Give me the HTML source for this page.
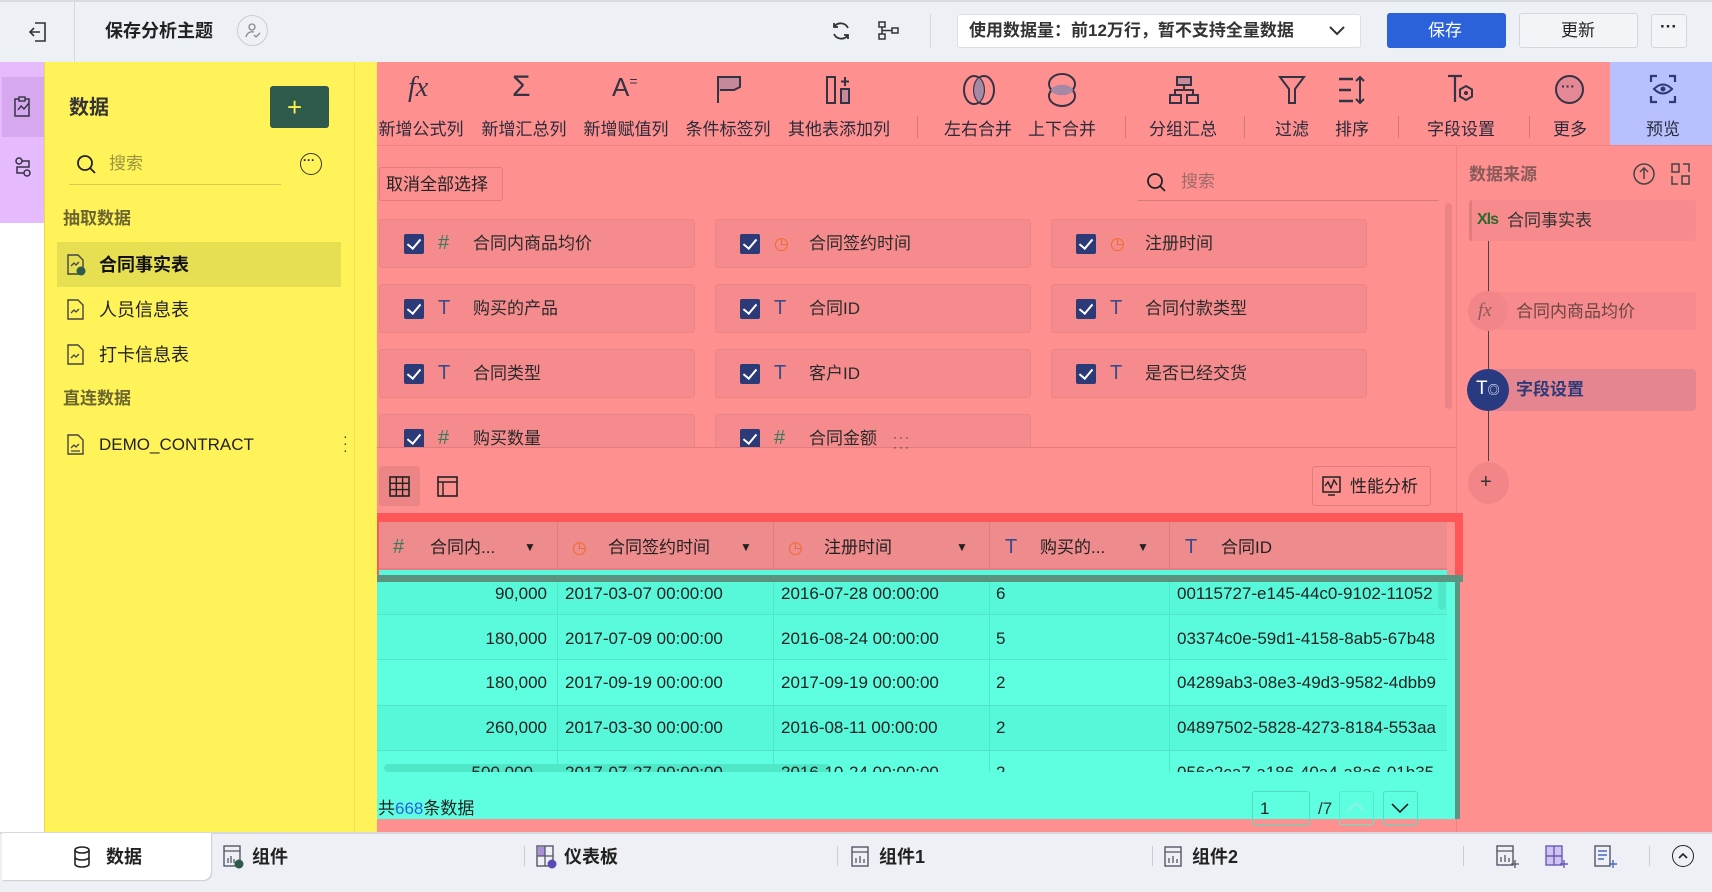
<!DOCTYPE html>
<html><head><meta charset="utf-8">
<style>
*{box-sizing:border-box;margin:0;padding:0}
body{width:1712px;height:892px;overflow:hidden;position:relative;background:#fff;font-family:"Liberation Sans","Noto Sans CJK SC",sans-serif;color:#222;font-size:16px}
.a{position:absolute}
.t{position:absolute;white-space:nowrap;line-height:1}
svg{position:absolute;overflow:visible}
.card{position:absolute;width:316px;height:49px;background:#f58b8d;border:1px solid #ec8486;border-radius:3px}
.cb{position:absolute;left:24px;top:14px;width:20px;height:20px;background:#2c3a78;border-radius:2px}
.cb:after{content:"";position:absolute;left:6px;top:2px;width:6px;height:11px;border:solid #fff;border-width:0 2.5px 2.5px 0;transform:rotate(40deg)}
.ty{position:absolute;left:58px;top:13px;font-size:20px;line-height:1}
.lb{position:absolute;left:93px;top:15px;font-size:17px;line-height:1;color:#2a2a2a}
.tb{position:absolute;top:115px;font-size:17px;transform:translateX(-50%);white-space:nowrap;color:#2a2a3a}
.row{position:absolute;left:377px;width:1070px;height:45px;border-bottom:1px solid #4fe6c9}
.cell{position:absolute;top:14px;font-size:17px;white-space:nowrap;color:#222}
</style></head><body>
<!-- top bar -->
<div class="a" style="left:0;top:0;width:1712px;height:62px;background:#edf0f5;border-top:2px solid #d8dbe0"></div>
<div class="a" style="left:74px;top:2px;width:1px;height:60px;background:#d5d8de"></div>
<svg style="left:28px;top:21px" width="20" height="22"><path d="M7 2h10v18H7M2 11h10M6 7l-4 4 4 4" fill="none" stroke="#333" stroke-width="1.6"/></svg>
<div class="t" style="left:105px;top:22px;font-size:18px;font-weight:bold;color:#222">保存分析主题</div>
<div class="a" style="left:237px;top:15px;width:31px;height:31px;border:1px solid #c9ccd2;border-radius:50%"></div>
<svg style="left:245px;top:22px" width="16" height="16"><circle cx="7" cy="5" r="3" fill="none" stroke="#888" stroke-width="1.3"/><path d="M1 15c1-4 4-6 8-5M9 13l2 2 4-4" fill="none" stroke="#888" stroke-width="1.3"/></svg>
<svg style="left:830px;top:20px" width="22" height="22"><path d="M18 8A8 8 0 0 0 4 7M4 14a8 8 0 0 0 14 1M4 3v4h4M18 19v-4h-4" fill="none" stroke="#333" stroke-width="1.8"/></svg>
<svg style="left:878px;top:21px" width="22" height="20"><rect x="1" y="1" width="6" height="5" fill="none" stroke="#333" stroke-width="1.5"/><rect x="1" y="13" width="6" height="5" fill="none" stroke="#333" stroke-width="1.5"/><rect x="14" y="7" width="6" height="5" fill="none" stroke="#333" stroke-width="1.5"/><path d="M4 6v7M4 9.5h10" stroke="#333" stroke-width="1.5"/></svg>
<div class="a" style="left:930px;top:14px;width:1px;height:34px;background:#d5d8de"></div>
<div class="a" style="left:957px;top:14px;width:404px;height:34px;background:#fff;border:1px solid #dcdfe5;border-radius:3px"></div>
<div class="t" style="left:969px;top:22px;font-size:17px;font-weight:bold;color:#333">使用数据量：前12万行，暂不支持全量数据</div>
<svg style="left:1329px;top:25px" width="16" height="12"><path d="M1 2l7 7 7-7" fill="none" stroke="#333" stroke-width="2"/></svg>
<div class="a" style="left:1387px;top:13px;width:119px;height:35px;background:#2b62da;border-radius:3px"></div>
<div class="t" style="left:1428px;top:22px;font-size:17px;color:#fff">保存</div>
<div class="a" style="left:1519px;top:13px;width:119px;height:35px;background:#f3f4f7;border:1px solid #d3d6dc;border-radius:3px"></div>
<div class="t" style="left:1561px;top:22px;font-size:17px;color:#222">更新</div>
<div class="a" style="left:1651px;top:14px;width:36px;height:34px;background:#f3f4f7;border:1px solid #d3d6dc;border-radius:3px"></div>
<div class="t" style="left:1660px;top:18px;font-size:17px;font-weight:bold">···</div>

<!-- left purple strip -->
<div class="a" style="left:0;top:62px;width:44px;height:161px;background:#e6bbfd"></div>
<div class="a" style="left:2px;top:77px;width:42px;height:60px;background:#d6a9ee"></div>
<svg style="left:13px;top:96px" width="20" height="22"><rect x="2" y="3" width="14" height="17" fill="none" stroke="#334" stroke-width="1.5"/><rect x="6" y="1" width="6" height="4" fill="#d6a9ee" stroke="#334" stroke-width="1.4"/><path d="M5 14l3-4 3 3 5-6" fill="none" stroke="#334" stroke-width="1.4"/></svg>
<svg style="left:13px;top:156px" width="20" height="22"><circle cx="6" cy="5" r="3" fill="none" stroke="#334" stroke-width="1.5"/><circle cx="14" cy="17" r="3" fill="none" stroke="#334" stroke-width="1.5"/><path d="M9 5h7v6H4v6h7" fill="none" stroke="#334" stroke-width="1.5"/></svg>

<!-- yellow panel -->
<div class="a" style="left:44px;top:62px;width:333px;height:770px;background:#fff359;border-left:1px solid #e6d84a"></div>
<div class="a" style="left:354px;top:62px;width:1px;height:770px;background:#f0e250"></div>
<div class="t" style="left:69px;top:98px;font-size:20px;font-weight:bold;color:#333">数据</div>
<div class="a" style="left:270px;top:86px;width:59px;height:42px;background:#2d5a4b;border-radius:3px"></div>
<div class="t" style="left:287px;top:94px;font-size:26px;color:#ffef4a">+</div>
<svg style="left:76px;top:154px" width="22" height="22"><circle cx="9" cy="9" r="7" fill="none" stroke="#222" stroke-width="1.8"/><path d="M14 14l5 5" stroke="#222" stroke-width="1.8"/></svg>
<div class="t" style="left:109px;top:155px;font-size:17px;color:#9a9540">搜索</div>
<div class="a" style="left:69px;top:184px;width:212px;height:1px;background:#d6cb4a"></div>
<div class="a" style="left:300px;top:153px;width:22px;height:22px;border:1.5px solid #333;border-radius:50%"></div>
<div class="t" style="left:303px;top:154px;font-size:12px;font-weight:bold">···</div>
<div class="t" style="left:63px;top:210px;font-size:17px;font-weight:bold;color:#6b6630">抽取数据</div>
<div class="a" style="left:57px;top:242px;width:284px;height:45px;background:#e6df52"></div>
<svg style="left:66px;top:254px" width="20" height="22"><path d="M2 1h10l5 5v14H2z" fill="none" stroke="#444" stroke-width="1.4"/><path d="M5 12l3-3 2 2 3-3" fill="none" stroke="#444" stroke-width="1.3"/><circle cx="15" cy="17" r="4.5" fill="#2d5a4b"/></svg>
<div class="t" style="left:99px;top:256px;font-size:18px;font-weight:bold;color:#111">合同事实表</div>
<svg style="left:66px;top:299px" width="20" height="22"><path d="M2 1h10l5 5v14H2z" fill="none" stroke="#444" stroke-width="1.4"/><path d="M5 14l3-3 2 2 3-3" fill="none" stroke="#444" stroke-width="1.3"/></svg>
<div class="t" style="left:99px;top:301px;font-size:18px;color:#222">人员信息表</div>
<svg style="left:66px;top:344px" width="20" height="22"><path d="M2 1h10l5 5v14H2z" fill="none" stroke="#444" stroke-width="1.4"/><path d="M5 14l3-3 2 2 3-3" fill="none" stroke="#444" stroke-width="1.3"/></svg>
<div class="t" style="left:99px;top:346px;font-size:18px;color:#222">打卡信息表</div>
<div class="t" style="left:63px;top:390px;font-size:17px;font-weight:bold;color:#6b6630">直连数据</div>
<svg style="left:66px;top:434px" width="20" height="22"><path d="M2 1h10l5 5v14H2z" fill="none" stroke="#444" stroke-width="1.4"/><path d="M5 14l3-3 2 2 3-3M5 17h9" fill="none" stroke="#444" stroke-width="1.3"/></svg>
<div class="t" style="left:99px;top:436px;font-size:17px;color:#222">DEMO_CONTRACT</div>
<div class="t" style="left:343px;top:433px;font-size:14px;line-height:7px;color:#333">·<br>·<br>·</div>

<!-- red main -->
<div class="a" style="left:377px;top:62px;width:1335px;height:770px;background:#fe9190"></div>
<div class="a" style="left:1610px;top:62px;width:102px;height:84px;background:#b8c0fd"></div>
<div class="a" style="left:377px;top:145px;width:1335px;height:1px;background:#ef8283"></div>
<!-- toolbar icons -->
<div class="t" style="left:408px;top:74px;font-size:28px;font-style:italic;font-family:'Liberation Serif',serif;color:#334">fx</div>
<div class="t" style="left:512px;top:72px;font-size:30px;color:#334">Σ</div>
<div class="t" style="left:612px;top:74px;font-size:26px;color:#334">A<span style="font-size:14px;vertical-align:top">=</span></div>
<svg style="left:716px;top:75px" width="26" height="30"><path d="M2 28V2h22v10l-6 3H4" fill="#c48a9a" stroke="#334" stroke-width="2"/></svg>
<svg style="left:825px;top:75px" width="28" height="30"><rect x="2" y="2" width="8" height="26" fill="none" stroke="#334" stroke-width="2"/><rect x="16" y="14" width="8" height="14" fill="#c48a9a" stroke="#334" stroke-width="2"/><path d="M20 2v9M16 6.5h8" stroke="#334" stroke-width="2"/></svg>
<div class="a" style="left:917px;top:116px;width:1px;height:22px;background:#d27878"></div>
<svg style="left:962px;top:74px" width="34" height="32"><ellipse cx="12" cy="16" rx="10" ry="14" fill="none" stroke="#334" stroke-width="2"/><ellipse cx="22" cy="16" rx="10" ry="14" fill="none" stroke="#334" stroke-width="2"/><path d="M17 4a10 14 0 0 1 0 24a10 14 0 0 1 0-24z" fill="#a58aa6"/></svg>
<svg style="left:1047px;top:72px" width="30" height="36"><ellipse cx="15" cy="12" rx="13" ry="10" fill="none" stroke="#334" stroke-width="2"/><ellipse cx="15" cy="24" rx="13" ry="10" fill="none" stroke="#334" stroke-width="2"/><ellipse cx="15" cy="18" rx="11" ry="5" fill="#a58aa6"/></svg>
<div class="a" style="left:1125px;top:116px;width:1px;height:22px;background:#d27878"></div>
<svg style="left:1168px;top:75px" width="32" height="30"><rect x="9" y="2" width="14" height="8" fill="#c48a9a" stroke="#334" stroke-width="2"/><rect x="2" y="20" width="11" height="8" fill="none" stroke="#334" stroke-width="2"/><rect x="19" y="20" width="11" height="8" fill="none" stroke="#334" stroke-width="2"/><path d="M16 10v5M7 20v-5h18v5" fill="none" stroke="#334" stroke-width="2"/></svg>
<div class="a" style="left:1244px;top:116px;width:1px;height:22px;background:#d27878"></div>
<svg style="left:1278px;top:75px" width="28" height="30"><path d="M2 2h24L17 14v14h-6V14z" fill="none" stroke="#334" stroke-width="2"/></svg>
<svg style="left:1337px;top:75px" width="30" height="30"><path d="M2 4h14M2 15h12M2 26h14" stroke="#334" stroke-width="2.5"/><path d="M23 2v26M19 6l4-4 4 4M19 24l4 4 4-4" fill="none" stroke="#334" stroke-width="2"/></svg>
<div class="a" style="left:1398px;top:116px;width:1px;height:22px;background:#d27878"></div>
<svg style="left:1446px;top:74px" width="32" height="32"><path d="M2 2h14M9 2v26" stroke="#334" stroke-width="2.2"/><path d="M20 12l6 3.5v7L20 26l-6-3.5v-7z" fill="none" stroke="#334" stroke-width="2"/><circle cx="20" cy="19" r="2" fill="#334"/></svg>
<div class="a" style="left:1529px;top:116px;width:1px;height:22px;background:#d27878"></div>
<div class="a" style="left:1555px;top:75px;width:29px;height:29px;border:2px solid #334;border-radius:50%;background:#e58895"></div>
<div class="t" style="left:1561px;top:79px;font-size:14px;font-weight:bold;color:#334">···</div>
<svg style="left:1649px;top:74px" width="28" height="30"><path d="M2 8V2h6M20 2h6v6M26 22v6h-6M8 28H2v-6" fill="none" stroke="#2c3a78" stroke-width="2.2"/><path d="M5 15q9-9 18 0q-9 9-18 0z" fill="none" stroke="#2c3a78" stroke-width="2"/><circle cx="14" cy="15" r="2.5" fill="#2c3a78"/></svg>
<div class="tb" style="left:421px">新增公式列</div>
<div class="tb" style="left:524px">新增汇总列</div>
<div class="tb" style="left:626px">新增赋值列</div>
<div class="tb" style="left:728px">条件标签列</div>
<div class="tb" style="left:839px">其他表添加列</div>
<div class="tb" style="left:978px">左右合并</div>
<div class="tb" style="left:1062px">上下合并</div>
<div class="tb" style="left:1183px">分组汇总</div>
<div class="tb" style="left:1292px">过滤</div>
<div class="tb" style="left:1352px">排序</div>
<div class="tb" style="left:1461px">字段设置</div>
<div class="tb" style="left:1570px">更多</div>
<div class="tb" style="left:1663px">预览</div>

<!-- field select -->
<div class="a" style="left:379px;top:167px;width:124px;height:34px;border:1px solid #e07c7d;border-radius:3px;background:#fb8f8f"></div>
<div class="t" style="left:386px;top:176px;font-size:17px;color:#222">取消全部选择</div>
<svg style="left:1146px;top:172px" width="22" height="22"><circle cx="9" cy="9" r="7" fill="none" stroke="#222" stroke-width="1.8"/><path d="M14 14l5 5" stroke="#222" stroke-width="1.8"/></svg>
<div class="t" style="left:1181px;top:173px;font-size:17px;color:#a06a6a">搜索</div>
<div class="a" style="left:1138px;top:200px;width:301px;height:1px;background:#d77a7b"></div>
<div class="a" style="left:1445px;top:203px;width:7px;height:206px;background:#ec8384;border-radius:4px"></div>

<div class="card" style="left:379px;top:219px"><div class="cb"></div><div class="ty" style="color:#3a7a5a">#</div><div class="lb">合同内商品均价</div></div>
<div class="card" style="left:715px;top:219px"><div class="cb"></div><div class="ty" style="color:#f06a2a;font-size:17px;top:15px">◷</div><div class="lb">合同签约时间</div></div>
<div class="card" style="left:1051px;top:219px"><div class="cb"></div><div class="ty" style="color:#f06a2a;font-size:17px;top:15px">◷</div><div class="lb">注册时间</div></div>
<div class="card" style="left:379px;top:284px"><div class="cb"></div><div class="ty" style="color:#3d4a8a">T</div><div class="lb">购买的产品</div></div>
<div class="card" style="left:715px;top:284px"><div class="cb"></div><div class="ty" style="color:#3d4a8a">T</div><div class="lb">合同ID</div></div>
<div class="card" style="left:1051px;top:284px"><div class="cb"></div><div class="ty" style="color:#3d4a8a">T</div><div class="lb">合同付款类型</div></div>
<div class="card" style="left:379px;top:349px"><div class="cb"></div><div class="ty" style="color:#3d4a8a">T</div><div class="lb">合同类型</div></div>
<div class="card" style="left:715px;top:349px"><div class="cb"></div><div class="ty" style="color:#3d4a8a">T</div><div class="lb">客户ID</div></div>
<div class="card" style="left:1051px;top:349px"><div class="cb"></div><div class="ty" style="color:#3d4a8a">T</div><div class="lb">是否已经交货</div></div>
<div class="a" style="left:377px;top:410px;width:1070px;height:38px;overflow:hidden">
<div class="card" style="left:2px;top:4px"><div class="cb"></div><div class="ty" style="color:#3a7a5a">#</div><div class="lb">购买数量</div></div>
<div class="card" style="left:338px;top:4px"><div class="cb"></div><div class="ty" style="color:#3a7a5a">#</div><div class="lb">合同金额</div></div>
</div>
<div class="a" style="left:377px;top:447px;width:1079px;height:1px;background:#e07c7d"></div>
<div class="t" style="left:893px;top:432px;font-size:12px;line-height:10px;color:#333;letter-spacing:2px">···<br>···</div>

<!-- right panel -->
<div class="a" style="left:1456px;top:146px;width:1px;height:686px;background:#ef8283"></div>
<div class="t" style="left:1469px;top:166px;font-size:17px;font-weight:bold;color:#8a5a5a">数据来源</div>
<svg style="left:1632px;top:162px" width="24" height="24"><circle cx="12" cy="12" r="10" fill="none" stroke="#444" stroke-width="1.5"/><path d="M12 17V7M8 10l4-4 4 4" fill="none" stroke="#444" stroke-width="1.5"/></svg>
<svg style="left:1671px;top:162px" width="20" height="24"><rect x="1" y="2" width="7" height="8" fill="none" stroke="#444" stroke-width="1.5"/><rect x="11" y="14" width="7" height="8" fill="none" stroke="#444" stroke-width="1.5"/><path d="M1 14v8h6M18 10V2h-6" fill="none" stroke="#444" stroke-width="1.5"/></svg>
<div class="a" style="left:1469px;top:200px;width:227px;height:41px;background:#f78a8d;border-left:3px solid #e07c7d;border-radius:3px"></div>
<div class="t" style="left:1477px;top:212px;font-size:16px;font-weight:bold;color:#2d6a2d;letter-spacing:-1px">Xls</div>
<div class="t" style="left:1507px;top:212px;font-size:17px;color:#333">合同事实表</div>
<div class="a" style="left:1488px;top:241px;width:1px;height:220px;background:#444"></div>
<div class="a" style="left:1469px;top:292px;width:227px;height:38px;background:#f78a8d;border-radius:19px 3px 3px 19px"></div>
<div class="a" style="left:1468px;top:291px;width:40px;height:40px;background:#f18588;border-radius:50%"></div>
<div class="t" style="left:1478px;top:301px;font-size:19px;font-style:italic;font-family:'Liberation Serif',serif;color:#8a5a5a">fx</div>
<div class="t" style="left:1516px;top:303px;font-size:17px;color:#6a4545">合同内商品均价</div>
<div class="a" style="left:1469px;top:369px;width:227px;height:42px;background:#e58590;border-radius:21px 4px 4px 21px"></div>
<div class="a" style="left:1467px;top:369px;width:42px;height:42px;background:#283a80;border-radius:50%"></div>
<div class="t" style="left:1476px;top:379px;font-size:19px;color:#fff">T<span style="font-size:12px">◎</span></div>
<div class="t" style="left:1516px;top:381px;font-size:17px;font-weight:bold;color:#2c3a78">字段设置</div>
<div class="a" style="left:1468px;top:462px;width:41px;height:42px;background:#f18588;border-radius:50%"></div>
<div class="t" style="left:1480px;top:472px;font-size:20px;color:#333">+</div>

<!-- table tools -->
<div class="a" style="left:379px;top:466px;width:41px;height:40px;background:#ec8585;border-radius:3px"></div>
<svg style="left:389px;top:476px" width="22" height="22"><rect x="1" y="1" width="19" height="19" fill="none" stroke="#222" stroke-width="1.6"/><path d="M7.3 1v19M13.6 1v19M1 7.3h19M1 13.6h19" stroke="#222" stroke-width="1.4"/></svg>
<svg style="left:437px;top:476px" width="22" height="22"><rect x="1" y="1" width="19" height="19" fill="none" stroke="#222" stroke-width="1.6"/><path d="M1 6h19M6 6v14" stroke="#222" stroke-width="1.4"/></svg>
<div class="a" style="left:1312px;top:466px;width:119px;height:40px;border:1px solid #e07c7d;border-radius:3px"></div>
<svg style="left:1322px;top:476px" width="20" height="20"><rect x="1" y="1" width="17" height="15" fill="none" stroke="#222" stroke-width="1.5"/><path d="M3 10l3-4 3 6 3-8 3 5M6 19h7" fill="none" stroke="#222" stroke-width="1.4"/></svg>
<div class="t" style="left:1350px;top:478px;font-size:17px;color:#222">性能分析</div>

<!-- table -->
<div class="a" style="left:377px;top:579px;width:1083px;height:240px;background:#5dffe0"></div>
<div class="row" style="top:570px;background:#57f7da"></div>
<div class="row" style="top:615px;background:#5afbdd"></div>
<div class="row" style="top:661px;background:#5dffe0"></div>
<div class="row" style="top:706px;background:#57f7da"></div>
<div class="row" style="top:751px;background:#5dffe0;height:21px;border:0"></div>
<div class="a" style="left:557px;top:579px;width:1px;height:193px;background:#4fe6c9"></div>
<div class="a" style="left:773px;top:579px;width:1px;height:193px;background:#4fe6c9"></div>
<div class="a" style="left:989px;top:579px;width:1px;height:193px;background:#4fe6c9"></div>
<div class="a" style="left:1169px;top:579px;width:1px;height:193px;background:#4fe6c9"></div>
<div class="a" style="left:377px;top:772px;width:1070px;height:47px;background:#5dffe0"></div>
<div class="a" style="left:384px;top:764px;width:446px;height:8px;background:#4ee8c8;border-radius:4px"></div>
<div class="a" style="left:1438px;top:578px;width:8px;height:32px;background:#4ee8c8;border-radius:4px"></div>
<!-- cells -->
<div class="cell" style="right:1165px;top:584px">90,000</div>
<div class="cell" style="left:565px;top:584px">2017-03-07 00:00:00</div>
<div class="cell" style="left:781px;top:584px">2016-07-28 00:00:00</div>
<div class="cell" style="left:996px;top:584px">6</div>
<div class="cell" style="left:1177px;top:584px;width:270px;overflow:hidden">00115727-e145-44c0-9102-11052</div>
<div class="cell" style="right:1165px;top:629px">180,000</div>
<div class="cell" style="left:565px;top:629px">2017-07-09 00:00:00</div>
<div class="cell" style="left:781px;top:629px">2016-08-24 00:00:00</div>
<div class="cell" style="left:996px;top:629px">5</div>
<div class="cell" style="left:1177px;top:629px;width:270px;overflow:hidden">03374c0e-59d1-4158-8ab5-67b48</div>
<div class="cell" style="right:1165px;top:673px">180,000</div>
<div class="cell" style="left:565px;top:673px">2017-09-19 00:00:00</div>
<div class="cell" style="left:781px;top:673px">2017-09-19 00:00:00</div>
<div class="cell" style="left:996px;top:673px">2</div>
<div class="cell" style="left:1177px;top:673px;width:270px;overflow:hidden">04289ab3-08e3-49d3-9582-4dbb9</div>
<div class="cell" style="right:1165px;top:718px">260,000</div>
<div class="cell" style="left:565px;top:718px">2017-03-30 00:00:00</div>
<div class="cell" style="left:781px;top:718px">2016-08-11 00:00:00</div>
<div class="cell" style="left:996px;top:718px">2</div>
<div class="cell" style="left:1177px;top:718px;width:270px;overflow:hidden">04897502-5828-4273-8184-553aa</div>
<div class="a" style="left:377px;top:760px;width:1070px;height:12px;overflow:hidden">
<div class="cell" style="right:914px;top:3px">500,000</div>
<div class="cell" style="left:188px;top:3px">2017-07-27 00:00:00</div>
<div class="cell" style="left:404px;top:3px">2016-10-24 00:00:00</div>
<div class="cell" style="left:619px;top:3px">2</div>
<div class="cell" style="left:800px;top:3px">056c2ca7-a186-40a4-a8a6-01b35</div>
</div>
<!-- header -->
<div class="a" style="left:377px;top:522px;width:1070px;height:48px;background:#ee8b8c;border-bottom:2px solid #e57e80"></div>
<div class="a" style="left:557px;top:522px;width:1px;height:48px;background:#e07c7d"></div>
<div class="a" style="left:773px;top:522px;width:1px;height:48px;background:#e07c7d"></div>
<div class="a" style="left:989px;top:522px;width:1px;height:48px;background:#e07c7d"></div>
<div class="a" style="left:1169px;top:522px;width:1px;height:48px;background:#e07c7d"></div>
<div class="t" style="left:393px;top:537px;font-size:20px;color:#3a7a5a">#</div>
<div class="t" style="left:430px;top:539px;font-size:17px">合同内...</div>
<div class="t" style="left:524px;top:541px;font-size:12px">▼</div>
<div class="t" style="left:572px;top:539px;font-size:17px;color:#f06a2a">◷</div>
<div class="t" style="left:608px;top:539px;font-size:17px">合同签约时间</div>
<div class="t" style="left:740px;top:541px;font-size:12px">▼</div>
<div class="t" style="left:788px;top:539px;font-size:17px;color:#f06a2a">◷</div>
<div class="t" style="left:824px;top:539px;font-size:17px">注册时间</div>
<div class="t" style="left:956px;top:541px;font-size:12px">▼</div>
<div class="t" style="left:1005px;top:537px;font-size:20px;color:#3d4a8a">T</div>
<div class="t" style="left:1040px;top:539px;font-size:17px">购买的...</div>
<div class="t" style="left:1137px;top:541px;font-size:12px">▼</div>
<div class="t" style="left:1185px;top:537px;font-size:20px;color:#3d4a8a">T</div>
<div class="t" style="left:1221px;top:539px;font-size:17px">合同ID</div>
<!-- red outline -->
<div class="a" style="left:377px;top:513px;width:1086px;height:9px;background:#ff5757"></div>
<div class="a" style="left:1455px;top:513px;width:8px;height:66px;background:#ff5757"></div>
<div class="a" style="left:377px;top:513px;width:2px;height:66px;background:#ff5757"></div>
<div class="a" style="left:377px;top:575px;width:1086px;height:7px;background:#5a9480"></div>
<div class="a" style="left:1455px;top:579px;width:5px;height:240px;background:#5a9480"></div>
<!-- footer -->
<div class="t" style="left:378px;top:800px;font-size:17px;color:#222">共<span style="color:#2b62da">668</span>条数据</div>
<div class="a" style="left:1252px;top:791px;width:58px;height:34px;border:1px solid #4ae0c0;border-radius:3px"></div>
<div class="t" style="left:1260px;top:800px;font-size:17px">1</div>
<div class="t" style="left:1318px;top:800px;font-size:17px;color:#333">/7</div>
<div class="a" style="left:1339px;top:791px;width:35px;height:34px;border:1px solid #52eccb;border-radius:3px"></div>
<svg style="left:1347px;top:802px" width="18" height="10"><path d="M1 9l8-8 8 8" fill="none" stroke="#9ee" stroke-width="1.6"/></svg>
<div class="a" style="left:1383px;top:791px;width:35px;height:34px;border:1px solid #4ae0c0;border-radius:3px"></div>
<svg style="left:1391px;top:803px" width="18" height="10"><path d="M1 1l8 8 8-8" fill="none" stroke="#222" stroke-width="1.6"/></svg>

<!-- bottom bar -->
<div class="a" style="left:0;top:832px;width:1712px;height:60px;background:#eef0f5;border-top:2px solid #d5d8de"></div>
<div class="a" style="left:2px;top:833px;width:209px;height:47px;background:#fff;border-radius:0 0 8px 0;box-shadow:1px 1px 1px #ccc"></div>
<svg style="left:73px;top:846px" width="18" height="22"><ellipse cx="9" cy="4" rx="7" ry="3" fill="none" stroke="#222" stroke-width="1.6"/><path d="M2 4v14c0 4 14 4 14 0V4M2 11c0 4 14 4 14 0" fill="none" stroke="#222" stroke-width="1.6"/></svg>
<div class="t" style="left:106px;top:848px;font-size:18px;font-weight:bold;color:#222">数据</div>
<svg style="left:223px;top:845px" width="22" height="24"><rect x="1" y="1" width="16" height="20" fill="none" stroke="#556" stroke-width="1.4"/><path d="M1 6h16M5 18v-5M8 18v-7M11 18v-4" stroke="#556" stroke-width="1.3"/><circle cx="16" cy="19" r="4.5" fill="#2d5a4b"/></svg>
<div class="t" style="left:252px;top:848px;font-size:18px;font-weight:bold;color:#222">组件</div>
<div class="a" style="left:524px;top:846px;width:1px;height:20px;background:#c8cbd2"></div>
<svg style="left:536px;top:845px" width="22" height="24"><rect x="1" y="1" width="16" height="20" fill="none" stroke="#556" stroke-width="1.4"/><rect x="2" y="2" width="7" height="9" fill="#a88fd8"/><path d="M1 11h16M9 1v20" stroke="#556" stroke-width="1.3"/><circle cx="16" cy="19" r="4.5" fill="#5a4ab8"/></svg>
<div class="t" style="left:564px;top:848px;font-size:18px;font-weight:bold;color:#222">仪表板</div>
<div class="a" style="left:837px;top:846px;width:1px;height:20px;background:#c8cbd2"></div>
<svg style="left:851px;top:846px" width="20" height="22"><rect x="1" y="1" width="16" height="19" fill="none" stroke="#556" stroke-width="1.4"/><path d="M1 6h16M5 17v-5M9 17v-7M13 17v-4" stroke="#556" stroke-width="1.3"/></svg>
<div class="t" style="left:879px;top:848px;font-size:18px;font-weight:bold;color:#222">组件1</div>
<div class="a" style="left:1152px;top:846px;width:1px;height:20px;background:#c8cbd2"></div>
<svg style="left:1164px;top:846px" width="20" height="22"><rect x="1" y="1" width="16" height="19" fill="none" stroke="#556" stroke-width="1.4"/><path d="M1 6h16M5 17v-5M9 17v-7M13 17v-4" stroke="#556" stroke-width="1.3"/></svg>
<div class="t" style="left:1192px;top:848px;font-size:18px;font-weight:bold;color:#222">组件2</div>
<div class="a" style="left:1463px;top:846px;width:1px;height:20px;background:#c8cbd2"></div>
<svg style="left:1496px;top:845px" width="24" height="24"><rect x="1" y="1" width="16" height="19" fill="none" stroke="#556" stroke-width="1.4"/><path d="M1 6h16M5 17v-5M9 17v-7M13 17v-4M19 15v8M15 19h8" stroke="#556" stroke-width="1.3"/></svg>
<svg style="left:1545px;top:845px" width="24" height="24"><rect x="1" y="1" width="16" height="19" fill="#cfc3f0" stroke="#6a5ab8" stroke-width="1.4"/><path d="M1 11h16M9 1v19M19 15v8M15 19h8" stroke="#6a5ab8" stroke-width="1.4"/></svg>
<svg style="left:1594px;top:845px" width="24" height="24"><rect x="1" y="1" width="15" height="20" fill="none" stroke="#556" stroke-width="1.4"/><path d="M4 6h9M4 10h9M4 14h6M19 15v8M15 19h8" stroke="#4a68c8" stroke-width="1.4"/></svg>
<div class="a" style="left:1649px;top:846px;width:1px;height:20px;background:#c8cbd2"></div>
<div class="a" style="left:1672px;top:845px;width:22px;height:22px;border:1.6px solid #222;border-radius:50%"></div>
<svg style="left:1678px;top:852px" width="10" height="7"><path d="M1 6l4-4 4 4" fill="none" stroke="#222" stroke-width="1.6"/></svg>
</body></html>
